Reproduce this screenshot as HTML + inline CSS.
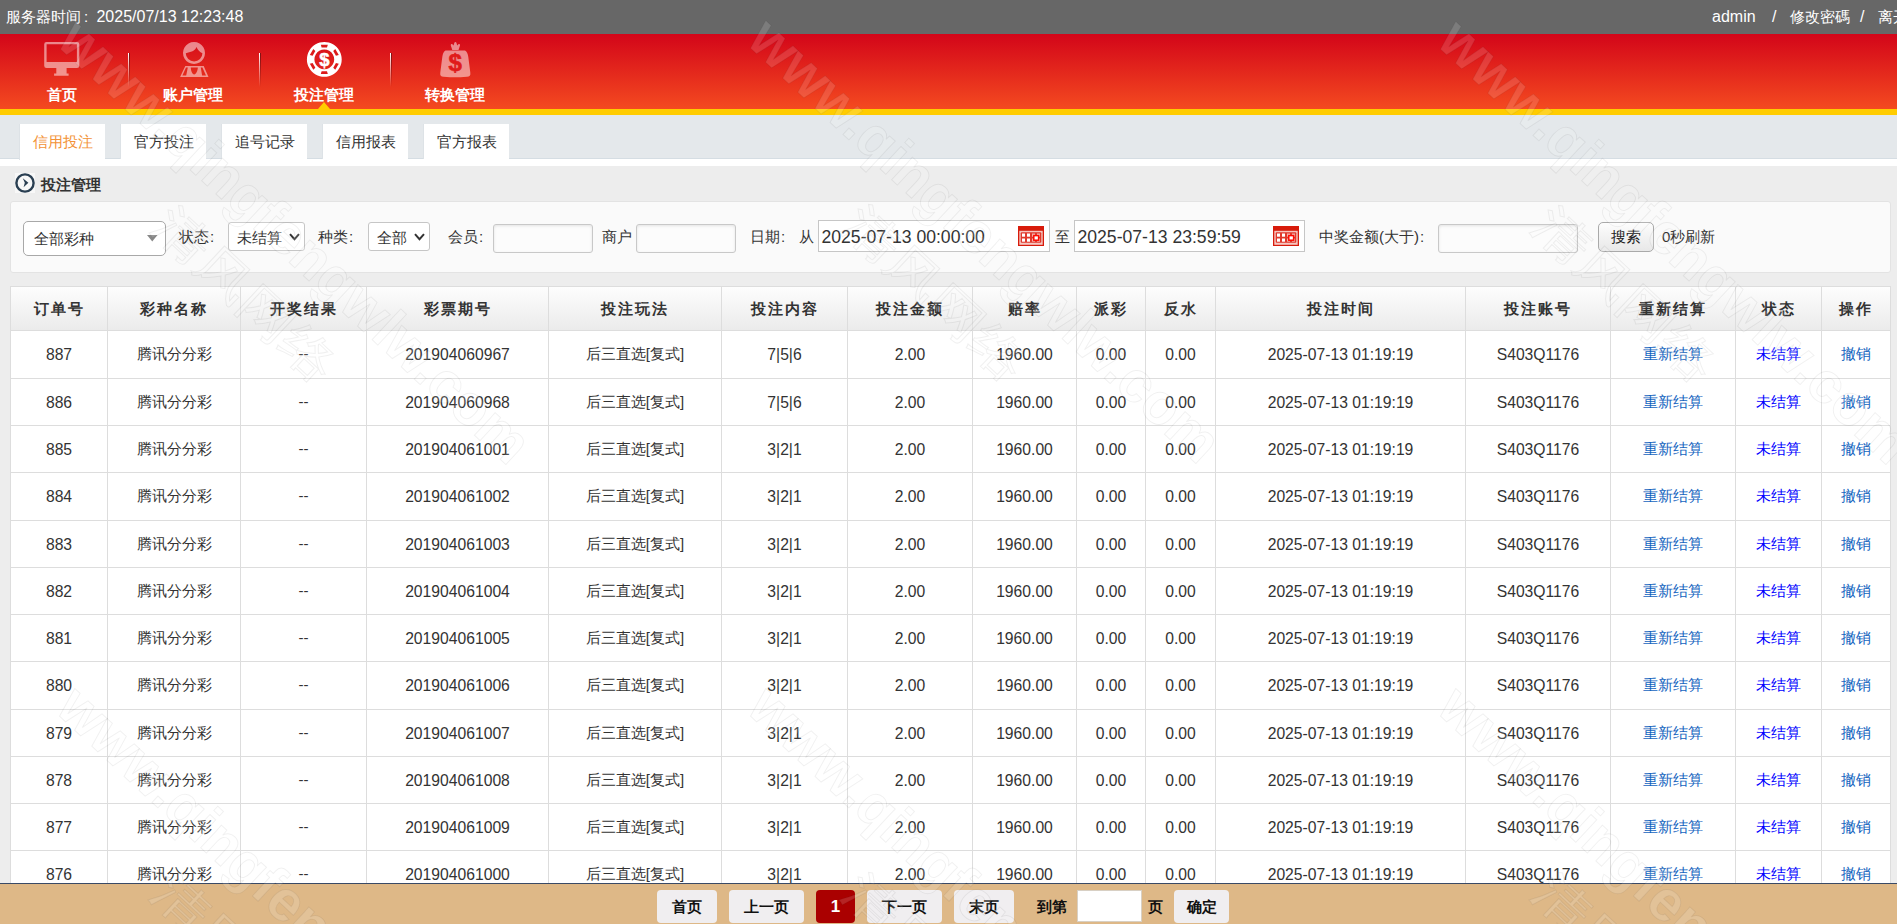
<!DOCTYPE html>
<html><head><meta charset="utf-8"><style>
*{margin:0;padding:0;box-sizing:border-box}
html,body{width:1897px;height:924px;overflow:hidden}
body{font-family:"Liberation Sans",sans-serif;font-size:15px;color:#333;background:#ededed;position:relative}
#topbar{position:absolute;left:0;top:0;width:1897px;height:34px;background:#676767;color:#fff;font-size:15px;line-height:34px}
#topbar .l{position:absolute;left:6px;top:0}
#topbar .r{position:absolute;left:1712px;top:0;white-space:nowrap}
#header{position:absolute;left:0;top:34px;width:1897px;height:75px;background:linear-gradient(#d30519,#f44a20)}
#yellow{position:absolute;left:0;top:109px;width:1897px;height:6px;background:#ffcc00}
.nav{position:absolute;top:0;width:100px;height:75px;color:#fff;font-weight:bold;font-size:15px;text-align:center}
.nav .lb{position:absolute;left:0;top:53px;width:100%;line-height:16px;white-space:nowrap}
.nav svg{position:absolute}
.sep{position:absolute;top:19px;width:2px;height:34px;background:linear-gradient(90deg,#fff 0,#fff 1.2px,#7a1515 1.2px,#7a1515 2px);-webkit-mask-image:linear-gradient(#000,rgba(0,0,0,0));mask-image:linear-gradient(#000,rgba(0,0,0,0))}
.tri{position:absolute;left:318px;top:102px;width:0;height:0;border-left:6.5px solid transparent;border-right:6.5px solid transparent;border-bottom:7px solid #ffcc00}
#tabbar{position:absolute;left:0;top:115px;width:1897px;height:44px;background:#e4e8eb;border-bottom:1px solid #d5dde3}
#whitestrip{position:absolute;left:0;top:159px;width:1897px;height:7px;background:#fff}
.tab{position:absolute;top:124px;width:86px;height:35px;background:#fff;text-align:center;line-height:35px;font-size:15px;color:#333;border-left:1px solid #dde2e6}
.tab.on{color:#f39338;height:36px}
#sectitle{position:absolute;left:41px;top:176px;font-weight:bold;font-size:15px;color:#333;line-height:18px}
#panel{position:absolute;left:10px;top:201px;width:1881px;height:72px;background:#fafafa;border:1px solid #e3e3e3;border-radius:3px}
.fl{position:absolute;font-size:15px;color:#333;line-height:20px;top:227px;white-space:nowrap}
.sel{position:absolute;background:#fff;border:1px solid #bbb;color:#333;font-size:15px;white-space:nowrap}
.inp{position:absolute;background:#fcfcfc;border:1px solid #c8c8c8;border-radius:3px;box-shadow:inset 0 1px 3px rgba(0,0,0,.1)}
.date{position:absolute;background:#fff;border:1px solid #c6c6c6;font-size:17.6px;color:#333;line-height:32px;padding-left:2.5px}
#tbl{position:absolute;left:10px;top:286px;width:1881px;height:611px;background:#fff;border:1px solid #ddd;border-bottom:none}
.vl{position:absolute;top:0;width:1px;height:611px;background:#ddd;z-index:2}
.thead{position:absolute;left:0;top:0;width:1879px;height:44px;background:linear-gradient(#fdfdfd,#ebebeb);border-bottom:1px solid #ddd}
.th{position:absolute;top:0;height:43px;line-height:43px;text-align:center;font-weight:bold;font-size:15px;letter-spacing:2px;color:#333}
.tr{position:absolute;left:0;width:1879px;border-top:1px solid #ddd}
.td{position:absolute;top:-1px;text-align:center;font-size:15px;color:#333;white-space:nowrap}
.lk{color:#1565c0}
.lk2{color:#0000ff}
#footer{z-index:10;position:absolute;left:0;top:883px;width:1897px;height:41px;background:#deb887;border-top:1px solid #3a4a66}
.pb{position:absolute;top:6px;height:33px;background:#f0eef0;border-radius:4px;font-weight:bold;font-size:15px;color:#111;text-align:center;line-height:33px}
.pb.cur{background:#aa0000;color:#fff}
.ft{position:absolute;top:6px;line-height:33px;font-weight:bold;font-size:15px;color:#111}

.cl{font-family:"Liberation Sans",sans-serif;display:inline-block;margin-left:1px;margin-right:4px}
.n16{font-size:16px}
.n{font-size:15.7px;position:relative;top:1px}
#topbar .r{position:absolute;top:0;white-space:nowrap}
#topbar .cl{margin-left:3px;margin-right:8.3px}
#wm{position:absolute;left:0;top:0;z-index:100;pointer-events:none}

</style></head><body>
<div id="topbar"><span class="l">服务器时间<span class="cl">:</span><span class="n16">2025/07/13 12:23:48</span></span><span class="r" style="left:1712px"><span class="n16">admin</span></span><span class="r n16" style="left:1772px">/</span><span class="r" style="left:1790px">修改密碼</span><span class="r n16" style="left:1860px">/</span><span class="r" style="left:1878px">离开</span></div>
<div id="header">
  <div class="sep" style="left:128px"></div>
  <div class="sep" style="left:259px"></div>
  <div class="sep" style="left:390px"></div>
  <div class="nav" style="left:12px"><div class="lb">首页</div></div>
  <div class="nav" style="left:143px"><div class="lb">账户管理</div></div>
  <div class="nav" style="left:274px"><div class="lb">投注管理</div></div>
  <div class="nav" style="left:405px"><div class="lb">转换管理</div></div>
</div>
<svg id="icons" style="position:absolute;left:0;top:0" width="600" height="115" viewBox="0 0 600 115">
  <g fill="#fff" fill-opacity=".5" fill-rule="evenodd">
    <!-- monitor -->
    <path d="M46.5 42h30.5a2.3 2.3 0 0 1 2.3 2.3v21.4a2.3 2.3 0 0 1-2.3 2.3h-30.5a2.3 2.3 0 0 1-2.3-2.3v-21.4a2.3 2.3 0 0 1 2.3-2.3zM46.6 44.2v17.8h30.3v-17.8z"/>
    <path d="M56.3 68h10.3v5.5h2v2.3h-14.5v-2.3h2.2z"/>
    <!-- person -->
    <path d="M194 42a11 11 0 1 0 0.01 0zM185.8 53.2a8.3 8.3 0 1 0 16.6 0c-2.5-1.2-4.8-3.5-5.9-6.3c-1.2 2.8-3.4 4.5-5.6 4.8c-1.8 0.4-3.5 0.9-5.1 1.5z"/>
    <path d="M185.3 66h18.4l4.8 11h-28.4zM186 67.5l-3.6 8h3.8l1.6-8zM190.8 67.5h7c0 3-1.6 6.9-3.6 6.9s-3.4-3.9-3.4-6.9zM200.8 67.5l1.3 8h3.9l-3.6-8z"/>
    <!-- money bag -->
    <path d="M452.3 50L450.8 45.5C450.5 44.2 451.8 43.6 452.6 44.5L453.6 45.6L454.2 43.2C454.6 41.7 456.2 41.7 456.6 43.2L457.2 45.6L458.2 44.5C459 43.6 460.3 44.2 460 45.5L458.5 50Z"/>
    <path d="M445.5 50.5L465 50.5C467 51.5 467.8 54 468.3 57L470.3 72.5C470.8 75.5 469.5 76.5 467 76.8C462 77.2 459 77.3 455.3 77.3C451.5 77.3 448.5 77.2 443.5 76.8C441 76.5 439.8 75.5 440.3 72.5L442.3 57C442.8 54 443.5 51.5 445.5 50.5Z"/>
  </g>
  <text x="455.2" y="71.3" font-family="Liberation Sans" font-weight="bold" font-size="24" fill="#e01b1b" stroke="#e01b1b" stroke-width=".6" text-anchor="middle">$</text>
  <!-- chip -->
  <g fill="#fff">
    <path fill-rule="evenodd" d="M324.3 42a17.4 17.4 0 1 0 0.01 0zM324.3 49.5a9.9 9.9 0 1 0 0.01 0z"/>
  </g>
  <g fill="#dc1a1a">
    <path d="M320.8 44.7h7l-0.8 2.8h-5.4z" />
    <path d="M320.8 44.7h7l-0.8 2.8h-5.4z" transform="rotate(60 324.3 59.4)"/>
    <path d="M320.8 44.7h7l-0.8 2.8h-5.4z" transform="rotate(120 324.3 59.4)"/>
    <path d="M320.8 44.7h7l-0.8 2.8h-5.4z" transform="rotate(180 324.3 59.4)"/>
    <path d="M320.8 44.7h7l-0.8 2.8h-5.4z" transform="rotate(240 324.3 59.4)"/>
    <path d="M320.8 44.7h7l-0.8 2.8h-5.4z" transform="rotate(300 324.3 59.4)"/>
  </g>
  <text x="324.4" y="65.8" font-family="Liberation Sans" font-weight="bold" font-size="18.5" fill="#fff" stroke="#fff" stroke-width=".5" text-anchor="middle">$</text>
</svg>
<div class="tri"></div>
<div id="yellow"></div>
<div id="tabbar"></div>
<div id="whitestrip"></div>
<div class="tab on" style="left:19px">信用投注</div>
<div class="tab" style="left:120px">官方投注</div>
<div class="tab" style="left:221px">追号记录</div>
<div class="tab" style="left:322px">信用报表</div>
<div class="tab" style="left:423px">官方报表</div>
<svg style="position:absolute;left:15px;top:173px" width="20" height="20" viewBox="0 0 20 20"><rect width="20" height="20" fill="#fff" fill-opacity=".6"/><circle cx="10" cy="10" r="8.6" fill="none" stroke="#2a3f52" stroke-width="2.4"/><path d="M7.8 5.3L13.4 9.8L8.6 14.2L9.8 9.8Z" fill="#2a3f52"/></svg>
<div id="sectitle">投注管理</div>
<div id="panel"></div>
<div class="sel" style="left:23px;top:221px;width:143px;height:35px;border-radius:5px;border-color:#a8a8a8;line-height:33px;padding-left:10px">全部彩种<svg style="position:absolute;left:123px;top:13px" width="11" height="7"><path d="M0 0h10.5l-5.25 6.5z" fill="#888"/></svg></div>
<div class="fl" style="left:179px">状态<span class="cl">:</span></div>
<div class="sel" style="left:228px;top:222px;width:77px;height:29px;border-radius:3px;line-height:27px;border-color:#c6c6c6;padding-left:8px;padding-top:1px">未结算<svg style="position:absolute;left:60px;top:10px" width="11" height="8"><path d="M1 1.2l4.5 5l4.5-5" fill="none" stroke="#333" stroke-width="2"/></svg></div>
<div class="fl" style="left:318px">种类<span class="cl">:</span></div>
<div class="sel" style="left:368px;top:222px;width:62px;height:29px;border-radius:3px;line-height:27px;border-color:#c6c6c6;padding-left:8px;padding-top:1px">全部<svg style="position:absolute;left:45px;top:10px" width="11" height="8"><path d="M1 1.2l4.5 5l4.5-5" fill="none" stroke="#333" stroke-width="2"/></svg></div>
<div class="fl" style="left:448px">会员<span class="cl">:</span></div>
<div class="inp" style="left:493px;top:224px;width:100px;height:29px"></div>
<div class="fl" style="left:602px">商户</div>
<div class="inp" style="left:636px;top:224px;width:100px;height:29px"></div>
<div class="fl" style="left:750px">日期<span class="cl">:</span></div>
<div class="fl" style="left:799px">从</div>
<div class="date" style="left:818px;top:220px;width:232px;height:32px">2025-07-13 00:00:00<svg class="cal" style="position:absolute;left:199px;top:5px" width="26" height="20" viewBox="0 0 26 20"><rect width="26" height="20" fill="#d81b0b"/><rect x="1.3" y="4.8" width="23.4" height="14" fill="#f6c6c0"/><rect x="2.7" y="6.2" width="20.6" height="10.6" rx="1" fill="#e0392c"/><g fill="#fff"><rect x="4" y="7.5" width="3" height="3.2"/><rect x="9" y="7.5" width="3" height="3.2"/><rect x="4" y="12.5" width="3" height="3.2"/><rect x="9" y="12.5" width="3" height="3.2"/><g fill-opacity=".6"><rect x="14" y="7.5" width="3" height="3.2"/><rect x="19" y="7.5" width="3" height="3.2"/><rect x="14" y="12.5" width="3" height="3.2"/><rect x="19" y="12.5" width="3" height="3.2"/></g></g><rect x="15.8" y="9.6" width="4.8" height="4.6" fill="#fff" stroke="#ff0a00" stroke-width="1.5"/></svg></div>
<div class="fl" style="left:1055px">至</div>
<div class="date" style="left:1074px;top:220px;width:231px;height:32px">2025-07-13 23:59:59<svg class="cal" style="position:absolute;left:198px;top:5px" width="26" height="20" viewBox="0 0 26 20"><rect width="26" height="20" fill="#d81b0b"/><rect x="1.3" y="4.8" width="23.4" height="14" fill="#f6c6c0"/><rect x="2.7" y="6.2" width="20.6" height="10.6" rx="1" fill="#e0392c"/><g fill="#fff"><rect x="4" y="7.5" width="3" height="3.2"/><rect x="9" y="7.5" width="3" height="3.2"/><rect x="4" y="12.5" width="3" height="3.2"/><rect x="9" y="12.5" width="3" height="3.2"/><g fill-opacity=".6"><rect x="14" y="7.5" width="3" height="3.2"/><rect x="19" y="7.5" width="3" height="3.2"/><rect x="14" y="12.5" width="3" height="3.2"/><rect x="19" y="12.5" width="3" height="3.2"/></g></g><rect x="15.8" y="9.6" width="4.8" height="4.6" fill="#fff" stroke="#ff0a00" stroke-width="1.5"/></svg></div>
<div class="fl" style="left:1319px">中奖金额(大于)<span class="cl">:</span></div>
<div class="inp" style="left:1438px;top:224px;width:140px;height:29px"></div>
<div class="btn" style="position:absolute;left:1598px;top:222px;width:56px;height:30px;border:1px solid #a9a9a9;border-radius:5px;background:linear-gradient(#fdfdfd,#e8e8e8);text-align:center;line-height:28px;font-size:15px;color:#222">搜索</div>
<div class="fl" style="left:1662px">0秒刷新</div>
<div id="tbl">
<div class="vl" style="left:96px"></div>
<div class="vl" style="left:229px"></div>
<div class="vl" style="left:355px"></div>
<div class="vl" style="left:537px"></div>
<div class="vl" style="left:710px"></div>
<div class="vl" style="left:836px"></div>
<div class="vl" style="left:961px"></div>
<div class="vl" style="left:1065px"></div>
<div class="vl" style="left:1134px"></div>
<div class="vl" style="left:1204px"></div>
<div class="vl" style="left:1454px"></div>
<div class="vl" style="left:1599px"></div>
<div class="vl" style="left:1724px"></div>
<div class="vl" style="left:1810px"></div>
<div class="thead">
<div class="th" style="left:0px;width:96px">订单号</div>
<div class="th" style="left:97px;width:132px">彩种名称</div>
<div class="th" style="left:230px;width:125px">开奖结果</div>
<div class="th" style="left:356px;width:181px">彩票期号</div>
<div class="th" style="left:538px;width:172px">投注玩法</div>
<div class="th" style="left:711px;width:125px">投注内容</div>
<div class="th" style="left:837px;width:124px">投注金额</div>
<div class="th" style="left:962px;width:103px">赔率</div>
<div class="th" style="left:1066px;width:68px">派彩</div>
<div class="th" style="left:1135px;width:69px">反水</div>
<div class="th" style="left:1205px;width:249px">投注时间</div>
<div class="th" style="left:1455px;width:144px">投注账号</div>
<div class="th" style="left:1600px;width:124px">重新结算</div>
<div class="th" style="left:1725px;width:85px">状态</div>
<div class="th" style="left:1811px;width:68px">操作</div>
</div>
<div class="tr" style="top:43px;height:48px">
<div class="td" style="left:0px;width:96px;height:48px;line-height:48px"><span class="n">887</span></div>
<div class="td" style="left:97px;width:132px;height:48px;line-height:48px">腾讯分分彩</div>
<div class="td" style="left:230px;width:125px;height:48px;line-height:48px">--</div>
<div class="td" style="left:356px;width:181px;height:48px;line-height:48px"><span class="n">201904060967</span></div>
<div class="td" style="left:538px;width:172px;height:48px;line-height:48px">后三直选[复式]</div>
<div class="td" style="left:711px;width:125px;height:48px;line-height:48px"><span class="n">7|5|6</span></div>
<div class="td" style="left:837px;width:124px;height:48px;line-height:48px"><span class="n">2.00</span></div>
<div class="td" style="left:962px;width:103px;height:48px;line-height:48px"><span class="n">1960.00</span></div>
<div class="td" style="left:1066px;width:68px;height:48px;line-height:48px"><span class="n">0.00</span></div>
<div class="td" style="left:1135px;width:69px;height:48px;line-height:48px"><span class="n">0.00</span></div>
<div class="td" style="left:1205px;width:249px;height:48px;line-height:48px"><span class="n">2025-07-13 01:19:19</span></div>
<div class="td" style="left:1455px;width:144px;height:48px;line-height:48px"><span class="n">S403Q1176</span></div>
<div class="td" style="left:1600px;width:124px;height:48px;line-height:48px"><span class="lk">重新结算</span></div>
<div class="td" style="left:1725px;width:85px;height:48px;line-height:48px"><span class="lk2">未结算</span></div>
<div class="td" style="left:1811px;width:68px;height:48px;line-height:48px"><span class="lk">撤销</span></div>
</div>
<div class="tr" style="top:91px;height:47px">
<div class="td" style="left:0px;width:96px;height:47px;line-height:47px"><span class="n">886</span></div>
<div class="td" style="left:97px;width:132px;height:47px;line-height:47px">腾讯分分彩</div>
<div class="td" style="left:230px;width:125px;height:47px;line-height:47px">--</div>
<div class="td" style="left:356px;width:181px;height:47px;line-height:47px"><span class="n">201904060968</span></div>
<div class="td" style="left:538px;width:172px;height:47px;line-height:47px">后三直选[复式]</div>
<div class="td" style="left:711px;width:125px;height:47px;line-height:47px"><span class="n">7|5|6</span></div>
<div class="td" style="left:837px;width:124px;height:47px;line-height:47px"><span class="n">2.00</span></div>
<div class="td" style="left:962px;width:103px;height:47px;line-height:47px"><span class="n">1960.00</span></div>
<div class="td" style="left:1066px;width:68px;height:47px;line-height:47px"><span class="n">0.00</span></div>
<div class="td" style="left:1135px;width:69px;height:47px;line-height:47px"><span class="n">0.00</span></div>
<div class="td" style="left:1205px;width:249px;height:47px;line-height:47px"><span class="n">2025-07-13 01:19:19</span></div>
<div class="td" style="left:1455px;width:144px;height:47px;line-height:47px"><span class="n">S403Q1176</span></div>
<div class="td" style="left:1600px;width:124px;height:47px;line-height:47px"><span class="lk">重新结算</span></div>
<div class="td" style="left:1725px;width:85px;height:47px;line-height:47px"><span class="lk2">未结算</span></div>
<div class="td" style="left:1811px;width:68px;height:47px;line-height:47px"><span class="lk">撤销</span></div>
</div>
<div class="tr" style="top:138px;height:47px">
<div class="td" style="left:0px;width:96px;height:47px;line-height:47px"><span class="n">885</span></div>
<div class="td" style="left:97px;width:132px;height:47px;line-height:47px">腾讯分分彩</div>
<div class="td" style="left:230px;width:125px;height:47px;line-height:47px">--</div>
<div class="td" style="left:356px;width:181px;height:47px;line-height:47px"><span class="n">201904061001</span></div>
<div class="td" style="left:538px;width:172px;height:47px;line-height:47px">后三直选[复式]</div>
<div class="td" style="left:711px;width:125px;height:47px;line-height:47px"><span class="n">3|2|1</span></div>
<div class="td" style="left:837px;width:124px;height:47px;line-height:47px"><span class="n">2.00</span></div>
<div class="td" style="left:962px;width:103px;height:47px;line-height:47px"><span class="n">1960.00</span></div>
<div class="td" style="left:1066px;width:68px;height:47px;line-height:47px"><span class="n">0.00</span></div>
<div class="td" style="left:1135px;width:69px;height:47px;line-height:47px"><span class="n">0.00</span></div>
<div class="td" style="left:1205px;width:249px;height:47px;line-height:47px"><span class="n">2025-07-13 01:19:19</span></div>
<div class="td" style="left:1455px;width:144px;height:47px;line-height:47px"><span class="n">S403Q1176</span></div>
<div class="td" style="left:1600px;width:124px;height:47px;line-height:47px"><span class="lk">重新结算</span></div>
<div class="td" style="left:1725px;width:85px;height:47px;line-height:47px"><span class="lk2">未结算</span></div>
<div class="td" style="left:1811px;width:68px;height:47px;line-height:47px"><span class="lk">撤销</span></div>
</div>
<div class="tr" style="top:185px;height:48px">
<div class="td" style="left:0px;width:96px;height:48px;line-height:48px"><span class="n">884</span></div>
<div class="td" style="left:97px;width:132px;height:48px;line-height:48px">腾讯分分彩</div>
<div class="td" style="left:230px;width:125px;height:48px;line-height:48px">--</div>
<div class="td" style="left:356px;width:181px;height:48px;line-height:48px"><span class="n">201904061002</span></div>
<div class="td" style="left:538px;width:172px;height:48px;line-height:48px">后三直选[复式]</div>
<div class="td" style="left:711px;width:125px;height:48px;line-height:48px"><span class="n">3|2|1</span></div>
<div class="td" style="left:837px;width:124px;height:48px;line-height:48px"><span class="n">2.00</span></div>
<div class="td" style="left:962px;width:103px;height:48px;line-height:48px"><span class="n">1960.00</span></div>
<div class="td" style="left:1066px;width:68px;height:48px;line-height:48px"><span class="n">0.00</span></div>
<div class="td" style="left:1135px;width:69px;height:48px;line-height:48px"><span class="n">0.00</span></div>
<div class="td" style="left:1205px;width:249px;height:48px;line-height:48px"><span class="n">2025-07-13 01:19:19</span></div>
<div class="td" style="left:1455px;width:144px;height:48px;line-height:48px"><span class="n">S403Q1176</span></div>
<div class="td" style="left:1600px;width:124px;height:48px;line-height:48px"><span class="lk">重新结算</span></div>
<div class="td" style="left:1725px;width:85px;height:48px;line-height:48px"><span class="lk2">未结算</span></div>
<div class="td" style="left:1811px;width:68px;height:48px;line-height:48px"><span class="lk">撤销</span></div>
</div>
<div class="tr" style="top:233px;height:47px">
<div class="td" style="left:0px;width:96px;height:47px;line-height:47px"><span class="n">883</span></div>
<div class="td" style="left:97px;width:132px;height:47px;line-height:47px">腾讯分分彩</div>
<div class="td" style="left:230px;width:125px;height:47px;line-height:47px">--</div>
<div class="td" style="left:356px;width:181px;height:47px;line-height:47px"><span class="n">201904061003</span></div>
<div class="td" style="left:538px;width:172px;height:47px;line-height:47px">后三直选[复式]</div>
<div class="td" style="left:711px;width:125px;height:47px;line-height:47px"><span class="n">3|2|1</span></div>
<div class="td" style="left:837px;width:124px;height:47px;line-height:47px"><span class="n">2.00</span></div>
<div class="td" style="left:962px;width:103px;height:47px;line-height:47px"><span class="n">1960.00</span></div>
<div class="td" style="left:1066px;width:68px;height:47px;line-height:47px"><span class="n">0.00</span></div>
<div class="td" style="left:1135px;width:69px;height:47px;line-height:47px"><span class="n">0.00</span></div>
<div class="td" style="left:1205px;width:249px;height:47px;line-height:47px"><span class="n">2025-07-13 01:19:19</span></div>
<div class="td" style="left:1455px;width:144px;height:47px;line-height:47px"><span class="n">S403Q1176</span></div>
<div class="td" style="left:1600px;width:124px;height:47px;line-height:47px"><span class="lk">重新结算</span></div>
<div class="td" style="left:1725px;width:85px;height:47px;line-height:47px"><span class="lk2">未结算</span></div>
<div class="td" style="left:1811px;width:68px;height:47px;line-height:47px"><span class="lk">撤销</span></div>
</div>
<div class="tr" style="top:280px;height:47px">
<div class="td" style="left:0px;width:96px;height:47px;line-height:47px"><span class="n">882</span></div>
<div class="td" style="left:97px;width:132px;height:47px;line-height:47px">腾讯分分彩</div>
<div class="td" style="left:230px;width:125px;height:47px;line-height:47px">--</div>
<div class="td" style="left:356px;width:181px;height:47px;line-height:47px"><span class="n">201904061004</span></div>
<div class="td" style="left:538px;width:172px;height:47px;line-height:47px">后三直选[复式]</div>
<div class="td" style="left:711px;width:125px;height:47px;line-height:47px"><span class="n">3|2|1</span></div>
<div class="td" style="left:837px;width:124px;height:47px;line-height:47px"><span class="n">2.00</span></div>
<div class="td" style="left:962px;width:103px;height:47px;line-height:47px"><span class="n">1960.00</span></div>
<div class="td" style="left:1066px;width:68px;height:47px;line-height:47px"><span class="n">0.00</span></div>
<div class="td" style="left:1135px;width:69px;height:47px;line-height:47px"><span class="n">0.00</span></div>
<div class="td" style="left:1205px;width:249px;height:47px;line-height:47px"><span class="n">2025-07-13 01:19:19</span></div>
<div class="td" style="left:1455px;width:144px;height:47px;line-height:47px"><span class="n">S403Q1176</span></div>
<div class="td" style="left:1600px;width:124px;height:47px;line-height:47px"><span class="lk">重新结算</span></div>
<div class="td" style="left:1725px;width:85px;height:47px;line-height:47px"><span class="lk2">未结算</span></div>
<div class="td" style="left:1811px;width:68px;height:47px;line-height:47px"><span class="lk">撤销</span></div>
</div>
<div class="tr" style="top:327px;height:47px">
<div class="td" style="left:0px;width:96px;height:47px;line-height:47px"><span class="n">881</span></div>
<div class="td" style="left:97px;width:132px;height:47px;line-height:47px">腾讯分分彩</div>
<div class="td" style="left:230px;width:125px;height:47px;line-height:47px">--</div>
<div class="td" style="left:356px;width:181px;height:47px;line-height:47px"><span class="n">201904061005</span></div>
<div class="td" style="left:538px;width:172px;height:47px;line-height:47px">后三直选[复式]</div>
<div class="td" style="left:711px;width:125px;height:47px;line-height:47px"><span class="n">3|2|1</span></div>
<div class="td" style="left:837px;width:124px;height:47px;line-height:47px"><span class="n">2.00</span></div>
<div class="td" style="left:962px;width:103px;height:47px;line-height:47px"><span class="n">1960.00</span></div>
<div class="td" style="left:1066px;width:68px;height:47px;line-height:47px"><span class="n">0.00</span></div>
<div class="td" style="left:1135px;width:69px;height:47px;line-height:47px"><span class="n">0.00</span></div>
<div class="td" style="left:1205px;width:249px;height:47px;line-height:47px"><span class="n">2025-07-13 01:19:19</span></div>
<div class="td" style="left:1455px;width:144px;height:47px;line-height:47px"><span class="n">S403Q1176</span></div>
<div class="td" style="left:1600px;width:124px;height:47px;line-height:47px"><span class="lk">重新结算</span></div>
<div class="td" style="left:1725px;width:85px;height:47px;line-height:47px"><span class="lk2">未结算</span></div>
<div class="td" style="left:1811px;width:68px;height:47px;line-height:47px"><span class="lk">撤销</span></div>
</div>
<div class="tr" style="top:374px;height:48px">
<div class="td" style="left:0px;width:96px;height:48px;line-height:48px"><span class="n">880</span></div>
<div class="td" style="left:97px;width:132px;height:48px;line-height:48px">腾讯分分彩</div>
<div class="td" style="left:230px;width:125px;height:48px;line-height:48px">--</div>
<div class="td" style="left:356px;width:181px;height:48px;line-height:48px"><span class="n">201904061006</span></div>
<div class="td" style="left:538px;width:172px;height:48px;line-height:48px">后三直选[复式]</div>
<div class="td" style="left:711px;width:125px;height:48px;line-height:48px"><span class="n">3|2|1</span></div>
<div class="td" style="left:837px;width:124px;height:48px;line-height:48px"><span class="n">2.00</span></div>
<div class="td" style="left:962px;width:103px;height:48px;line-height:48px"><span class="n">1960.00</span></div>
<div class="td" style="left:1066px;width:68px;height:48px;line-height:48px"><span class="n">0.00</span></div>
<div class="td" style="left:1135px;width:69px;height:48px;line-height:48px"><span class="n">0.00</span></div>
<div class="td" style="left:1205px;width:249px;height:48px;line-height:48px"><span class="n">2025-07-13 01:19:19</span></div>
<div class="td" style="left:1455px;width:144px;height:48px;line-height:48px"><span class="n">S403Q1176</span></div>
<div class="td" style="left:1600px;width:124px;height:48px;line-height:48px"><span class="lk">重新结算</span></div>
<div class="td" style="left:1725px;width:85px;height:48px;line-height:48px"><span class="lk2">未结算</span></div>
<div class="td" style="left:1811px;width:68px;height:48px;line-height:48px"><span class="lk">撤销</span></div>
</div>
<div class="tr" style="top:422px;height:47px">
<div class="td" style="left:0px;width:96px;height:47px;line-height:47px"><span class="n">879</span></div>
<div class="td" style="left:97px;width:132px;height:47px;line-height:47px">腾讯分分彩</div>
<div class="td" style="left:230px;width:125px;height:47px;line-height:47px">--</div>
<div class="td" style="left:356px;width:181px;height:47px;line-height:47px"><span class="n">201904061007</span></div>
<div class="td" style="left:538px;width:172px;height:47px;line-height:47px">后三直选[复式]</div>
<div class="td" style="left:711px;width:125px;height:47px;line-height:47px"><span class="n">3|2|1</span></div>
<div class="td" style="left:837px;width:124px;height:47px;line-height:47px"><span class="n">2.00</span></div>
<div class="td" style="left:962px;width:103px;height:47px;line-height:47px"><span class="n">1960.00</span></div>
<div class="td" style="left:1066px;width:68px;height:47px;line-height:47px"><span class="n">0.00</span></div>
<div class="td" style="left:1135px;width:69px;height:47px;line-height:47px"><span class="n">0.00</span></div>
<div class="td" style="left:1205px;width:249px;height:47px;line-height:47px"><span class="n">2025-07-13 01:19:19</span></div>
<div class="td" style="left:1455px;width:144px;height:47px;line-height:47px"><span class="n">S403Q1176</span></div>
<div class="td" style="left:1600px;width:124px;height:47px;line-height:47px"><span class="lk">重新结算</span></div>
<div class="td" style="left:1725px;width:85px;height:47px;line-height:47px"><span class="lk2">未结算</span></div>
<div class="td" style="left:1811px;width:68px;height:47px;line-height:47px"><span class="lk">撤销</span></div>
</div>
<div class="tr" style="top:469px;height:47px">
<div class="td" style="left:0px;width:96px;height:47px;line-height:47px"><span class="n">878</span></div>
<div class="td" style="left:97px;width:132px;height:47px;line-height:47px">腾讯分分彩</div>
<div class="td" style="left:230px;width:125px;height:47px;line-height:47px">--</div>
<div class="td" style="left:356px;width:181px;height:47px;line-height:47px"><span class="n">201904061008</span></div>
<div class="td" style="left:538px;width:172px;height:47px;line-height:47px">后三直选[复式]</div>
<div class="td" style="left:711px;width:125px;height:47px;line-height:47px"><span class="n">3|2|1</span></div>
<div class="td" style="left:837px;width:124px;height:47px;line-height:47px"><span class="n">2.00</span></div>
<div class="td" style="left:962px;width:103px;height:47px;line-height:47px"><span class="n">1960.00</span></div>
<div class="td" style="left:1066px;width:68px;height:47px;line-height:47px"><span class="n">0.00</span></div>
<div class="td" style="left:1135px;width:69px;height:47px;line-height:47px"><span class="n">0.00</span></div>
<div class="td" style="left:1205px;width:249px;height:47px;line-height:47px"><span class="n">2025-07-13 01:19:19</span></div>
<div class="td" style="left:1455px;width:144px;height:47px;line-height:47px"><span class="n">S403Q1176</span></div>
<div class="td" style="left:1600px;width:124px;height:47px;line-height:47px"><span class="lk">重新结算</span></div>
<div class="td" style="left:1725px;width:85px;height:47px;line-height:47px"><span class="lk2">未结算</span></div>
<div class="td" style="left:1811px;width:68px;height:47px;line-height:47px"><span class="lk">撤销</span></div>
</div>
<div class="tr" style="top:516px;height:47px">
<div class="td" style="left:0px;width:96px;height:47px;line-height:47px"><span class="n">877</span></div>
<div class="td" style="left:97px;width:132px;height:47px;line-height:47px">腾讯分分彩</div>
<div class="td" style="left:230px;width:125px;height:47px;line-height:47px">--</div>
<div class="td" style="left:356px;width:181px;height:47px;line-height:47px"><span class="n">201904061009</span></div>
<div class="td" style="left:538px;width:172px;height:47px;line-height:47px">后三直选[复式]</div>
<div class="td" style="left:711px;width:125px;height:47px;line-height:47px"><span class="n">3|2|1</span></div>
<div class="td" style="left:837px;width:124px;height:47px;line-height:47px"><span class="n">2.00</span></div>
<div class="td" style="left:962px;width:103px;height:47px;line-height:47px"><span class="n">1960.00</span></div>
<div class="td" style="left:1066px;width:68px;height:47px;line-height:47px"><span class="n">0.00</span></div>
<div class="td" style="left:1135px;width:69px;height:47px;line-height:47px"><span class="n">0.00</span></div>
<div class="td" style="left:1205px;width:249px;height:47px;line-height:47px"><span class="n">2025-07-13 01:19:19</span></div>
<div class="td" style="left:1455px;width:144px;height:47px;line-height:47px"><span class="n">S403Q1176</span></div>
<div class="td" style="left:1600px;width:124px;height:47px;line-height:47px"><span class="lk">重新结算</span></div>
<div class="td" style="left:1725px;width:85px;height:47px;line-height:47px"><span class="lk2">未结算</span></div>
<div class="td" style="left:1811px;width:68px;height:47px;line-height:47px"><span class="lk">撤销</span></div>
</div>
<div class="tr" style="top:563px;height:47px">
<div class="td" style="left:0px;width:96px;height:47px;line-height:47px"><span class="n">876</span></div>
<div class="td" style="left:97px;width:132px;height:47px;line-height:47px">腾讯分分彩</div>
<div class="td" style="left:230px;width:125px;height:47px;line-height:47px">--</div>
<div class="td" style="left:356px;width:181px;height:47px;line-height:47px"><span class="n">201904061000</span></div>
<div class="td" style="left:538px;width:172px;height:47px;line-height:47px">后三直选[复式]</div>
<div class="td" style="left:711px;width:125px;height:47px;line-height:47px"><span class="n">3|2|1</span></div>
<div class="td" style="left:837px;width:124px;height:47px;line-height:47px"><span class="n">2.00</span></div>
<div class="td" style="left:962px;width:103px;height:47px;line-height:47px"><span class="n">1960.00</span></div>
<div class="td" style="left:1066px;width:68px;height:47px;line-height:47px"><span class="n">0.00</span></div>
<div class="td" style="left:1135px;width:69px;height:47px;line-height:47px"><span class="n">0.00</span></div>
<div class="td" style="left:1205px;width:249px;height:47px;line-height:47px"><span class="n">2025-07-13 01:19:19</span></div>
<div class="td" style="left:1455px;width:144px;height:47px;line-height:47px"><span class="n">S403Q1176</span></div>
<div class="td" style="left:1600px;width:124px;height:47px;line-height:47px"><span class="lk">重新结算</span></div>
<div class="td" style="left:1725px;width:85px;height:47px;line-height:47px"><span class="lk2">未结算</span></div>
<div class="td" style="left:1811px;width:68px;height:47px;line-height:47px"><span class="lk">撤销</span></div>
</div>
</div>
<div id="footer">
  <div class="pb" style="left:657px;width:60px">首页</div>
  <div class="pb" style="left:729px;width:75px">上一页</div>
  <div class="pb cur" style="left:816px;width:39px;font-size:17px">1</div>
  <div class="pb" style="left:867px;width:75px">下一页</div>
  <div class="pb" style="left:954px;width:60px">末页</div>
  <div class="ft" style="left:1037px">到第</div>
  <div style="position:absolute;left:1077px;top:6px;width:65px;height:32px;background:#fff;border:1px solid #d8d0c4"></div>
  <div class="ft" style="left:1148px">页</div>
  <div class="pb" style="left:1174px;width:55px">确定</div>
</div>
<svg id="wm" width="1897" height="924" viewBox="0 0 1897 924"><g font-family="Liberation Sans, sans-serif" font-weight="bold" fill="#fff" fill-opacity=".14" stroke="#000" stroke-opacity=".06" stroke-width="1"><g transform="translate(55 44) rotate(43)"><text x="0" y="0" font-size="58" textLength="620" lengthAdjust="spacingAndGlyphs">www.qingfengwlw.com</text><text x="195" y="70" font-size="48" font-weight="normal" textLength="230" lengthAdjust="spacingAndGlyphs">清风网络</text></g><g transform="translate(745 43) rotate(43)"><text x="0" y="0" font-size="58" textLength="620" lengthAdjust="spacingAndGlyphs">www.qingfengwlw.com</text><text x="195" y="70" font-size="48" font-weight="normal" textLength="230" lengthAdjust="spacingAndGlyphs">清风网络</text></g><g transform="translate(1435 44) rotate(43)"><text x="0" y="0" font-size="58" textLength="620" lengthAdjust="spacingAndGlyphs">www.qingfengwlw.com</text><text x="195" y="70" font-size="48" font-weight="normal" textLength="230" lengthAdjust="spacingAndGlyphs">清风网络</text></g><g transform="translate(54 711) rotate(43)"><text x="0" y="0" font-size="58" textLength="620" lengthAdjust="spacingAndGlyphs">www.qingfengwlw.com</text><text x="195" y="70" font-size="48" font-weight="normal" textLength="230" lengthAdjust="spacingAndGlyphs">清风网络</text></g><g transform="translate(745 711) rotate(43)"><text x="0" y="0" font-size="58" textLength="620" lengthAdjust="spacingAndGlyphs">www.qingfengwlw.com</text><text x="195" y="70" font-size="48" font-weight="normal" textLength="230" lengthAdjust="spacingAndGlyphs">清风网络</text></g><g transform="translate(1435 711) rotate(43)"><text x="0" y="0" font-size="58" textLength="620" lengthAdjust="spacingAndGlyphs">www.qingfengwlw.com</text><text x="195" y="70" font-size="48" font-weight="normal" textLength="230" lengthAdjust="spacingAndGlyphs">清风网络</text></g></g></svg>

</body></html>
